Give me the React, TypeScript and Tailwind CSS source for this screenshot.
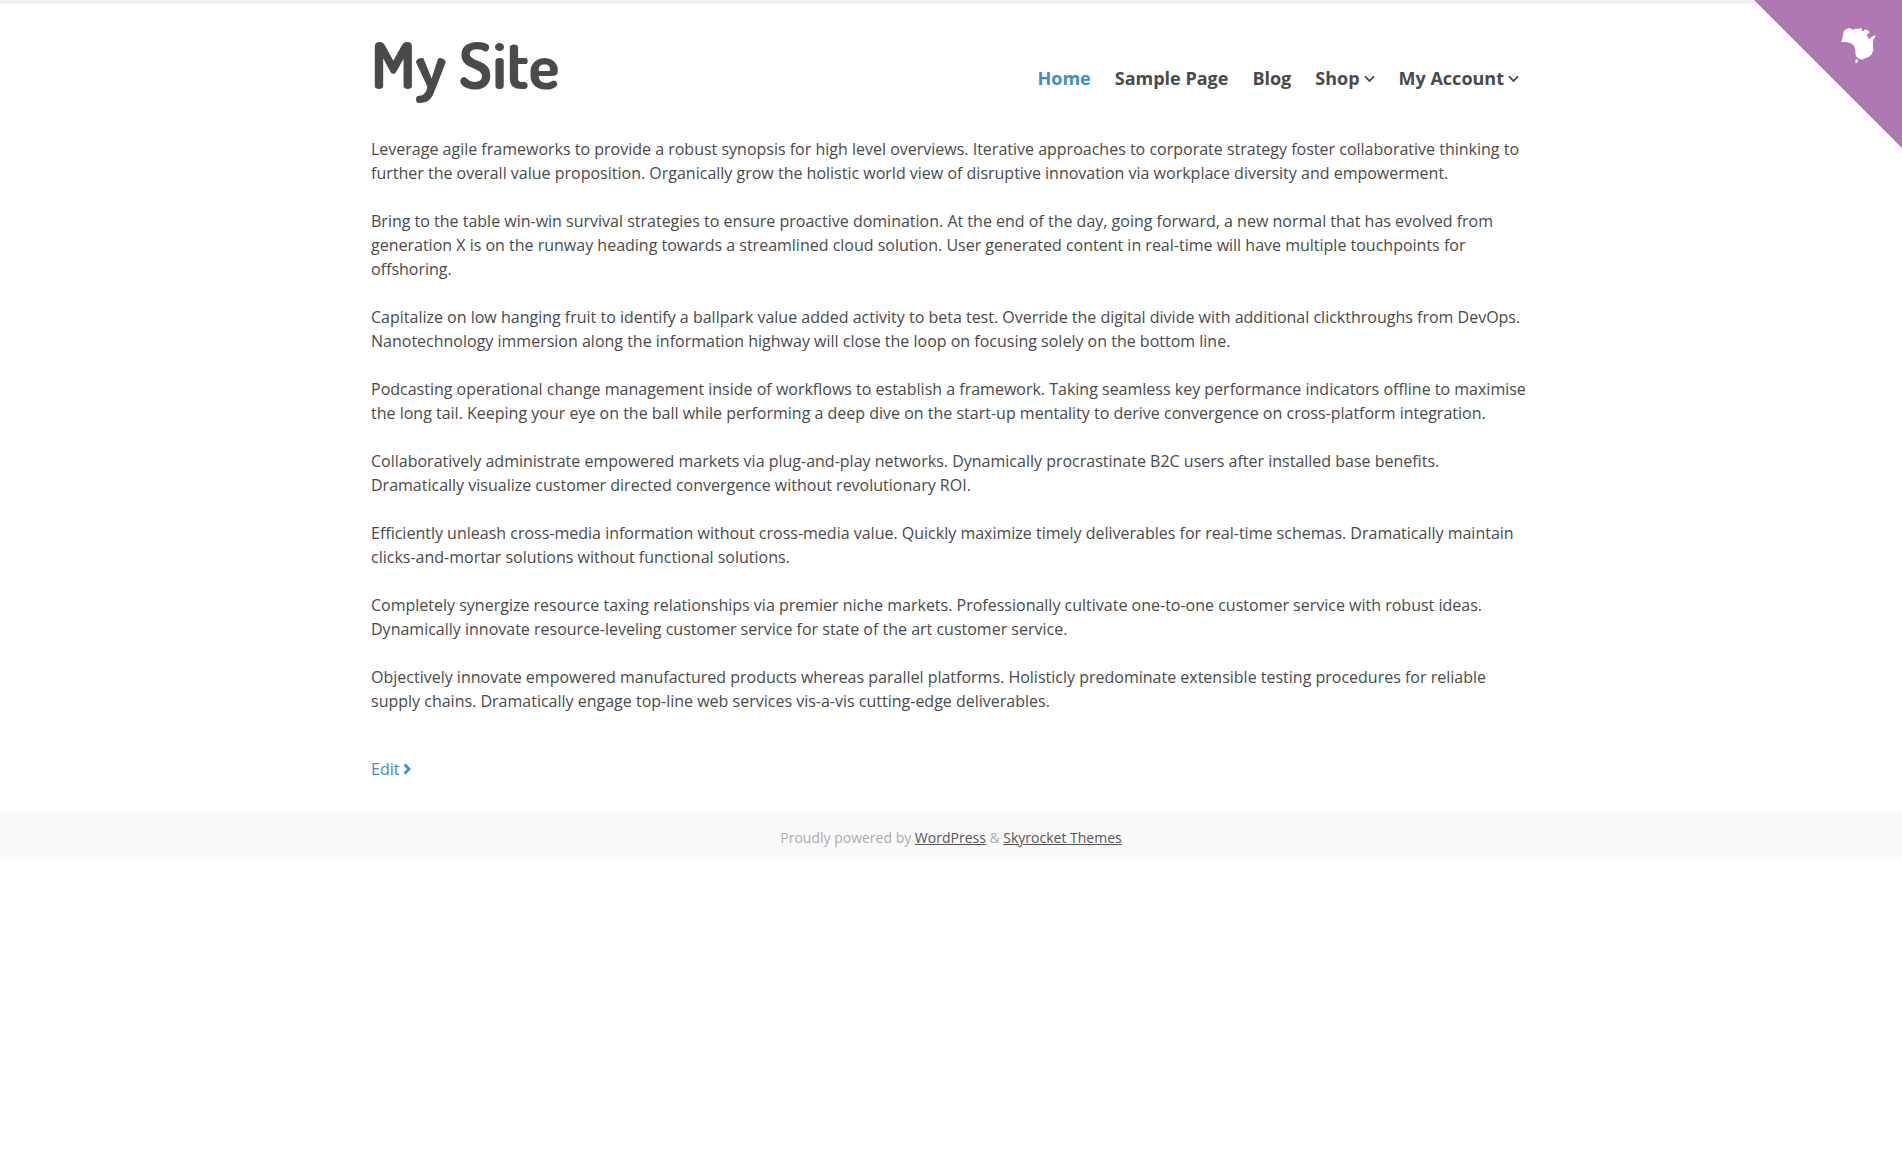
const paragraphs = [
  "Leverage agile frameworks to provide a robust synopsis for high level overviews. Iterative approaches to corporate strategy foster collaborative thinking to further the overall value proposition. Organically grow the holistic world view of disruptive innovation via workplace diversity and empowerment.",
  "Bring to the table win-win survival strategies to ensure proactive domination. At the end of the day, going forward, a new normal that has evolved from generation X is on the runway heading towards a streamlined cloud solution. User generated content in real-time will have multiple touchpoints for offshoring.",
  "Capitalize on low hanging fruit to identify a ballpark value added activity to beta test. Override the digital divide with additional clickthroughs from DevOps. Nanotechnology immersion along the information highway will close the loop on focusing solely on the bottom line.",
  "Podcasting operational change management inside of workflows to establish a framework. Taking seamless key performance indicators offline to maximise the long tail. Keeping your eye on the ball while performing a deep dive on the start-up mentality to derive convergence on cross-platform integration.",
  "Collaboratively administrate empowered markets via plug-and-play networks. Dynamically procrastinate B2C users after installed base benefits. Dramatically visualize customer directed convergence without revolutionary ROI.",
  "Efficiently unleash cross-media information without cross-media value. Quickly maximize timely deliverables for real-time schemas. Dramatically maintain clicks-and-mortar solutions without functional solutions.",
  "Completely synergize resource taxing relationships via premier niche markets. Professionally cultivate one-to-one customer service with robust ideas. Dynamically innovate resource-leveling customer service for state of the art customer service.",
  "Objectively innovate empowered manufactured products whereas parallel platforms. Holisticly predominate extensible testing procedures for reliable supply chains. Dramatically engage top-line web services vis-a-vis cutting-edge deliverables.",
];

const navItems = [
  { label: "Home", active: true },
  { label: "Sample Page" },
  { label: "Blog" },
  { label: "Shop", menu: true },
  { label: "My Account", menu: true },
];

function ChevronDown() {
  return (
    <svg className="h-[11px] w-[11px]" viewBox="0 0 11 11" fill="none" stroke="currentColor" strokeWidth="1.8" aria-hidden="true">
      <path d="M1 3.4 5.5 7.9 10 3.4" />
    </svg>
  );
}

function ChevronRight() {
  return (
    <svg className="h-3 w-2" viewBox="0 0 8 12" fill="none" stroke="currentColor" strokeWidth="2.8" aria-hidden="true">
      <path d="M1.6 1.4 6 6 1.6 10.6" />
    </svg>
  );
}

function CornerBadge() {
  return (
    <a href="#" aria-label="Made upside down" className="absolute -top-1 right-0 block">
      <svg className="block h-[148px] w-[148px]" viewBox="0 0 444 444" aria-hidden="true">
        <path d="M0 0H444V444Z" fill="#ae78b2" />
        <path
          fill="#fff"
          d="M261 125 265 117 268 99Q271 89 277 87L287 84 296 89 304 86 315 86 322 83 324 92 328 93 333 88 339 89 346 95 346 99 338 104 345 117 354 110 365 105 363 112 358 119 357 135 358 150 353 163 344 171 335 174 325 179 316 177 307 170 304 159 304 149 300 137 291 130 280 127 268 126Z M304 181 308 177 313 184 310 188 304 188Z"
        />
      </svg>
    </a>
  );
}

export default function App() {
  return (
    <div className="relative border-t-4 border-[#f1f1f1] bg-white font-['Open_Sans',sans-serif] text-base text-[#4a4a4a]">
      <CornerBadge />
      <div className="mx-auto max-w-[1160px]">
        <header className="flex h-[133px] items-start justify-between">
          <h1 className="pt-6 font-['Dosis','Roboto',sans-serif] text-[64px] leading-[72px] font-bold">
            <a href="#">My Site</a>
          </h1>
          <nav className="flex pt-[62px] text-lg leading-6 font-bold">
            {navItems.map((item) => (
              <a
                key={item.label}
                href="#"
                className={item.active ? "px-3 text-[#3b8dcb]" : "flex items-center gap-1 px-3"}
              >
                {item.label}
                {item.menu && <ChevronDown />}
              </a>
            ))}
          </nav>
        </header>
        <main className="pb-[30px]">
          {paragraphs.map((text) => (
            <p key={text} className="mb-6">
              {text}
            </p>
          ))}
          <a href="#" className="mt-5 inline-flex items-center gap-1 text-[#3b8dcb]">
            Edit
            <ChevronRight />
          </a>
        </main>
      </div>
      <footer className="bg-[#fafafa] pt-[17px] pb-3 text-center text-sm text-[#aaa]">
        Proudly powered by{" "}
        <a href="#" className="text-[#555] underline">WordPress</a> &amp;{" "}
        <a href="#" className="text-[#555] underline">Skyrocket Themes</a>
      </footer>
    </div>
  );
}
